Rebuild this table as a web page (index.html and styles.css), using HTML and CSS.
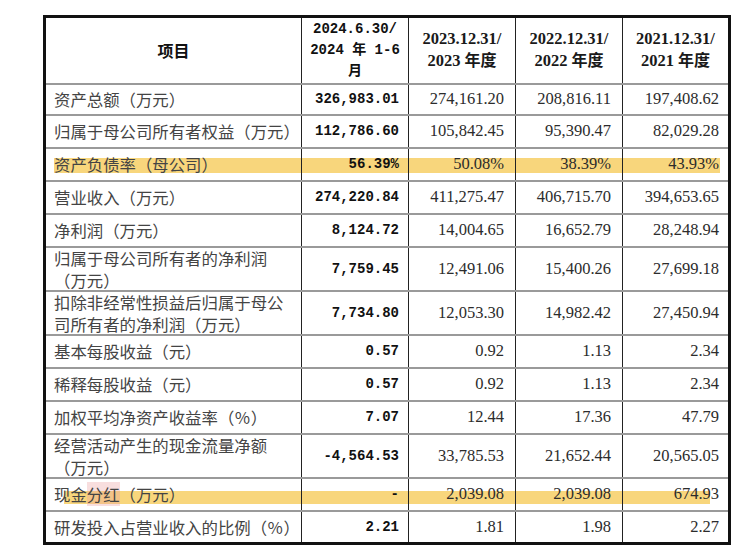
FILE: index.html
```html
<!DOCTYPE html>
<html lang="zh-CN">
<head>
<meta charset="utf-8">
<title>主要财务数据</title>
<link rel="stylesheet" href="styles.css">
</head>
<body>
<div class="page">
<table class="fin">
  <colgroup>
    <col class="c-item">
    <col class="c-num">
    <col class="c-num">
    <col class="c-num">
    <col class="c-num">
  </colgroup>
  <thead>
    <tr class="head">
      <th class="h-item">项目</th>
      <th class="h-cur">2024.6.30/<br>2024 年 1-6<br>月</th>
      <th class="h-year">2023.12.31/<br>2023 <span class="cjk">年度</span></th>
      <th class="h-year">2022.12.31/<br>2022 <span class="cjk">年度</span></th>
      <th class="h-year">2021.12.31/<br>2021 <span class="cjk">年度</span></th>
    </tr>
  </thead>
  <tbody>
    <tr class="single first">
      <td class="item">资产总额（万元）</td>
      <td class="cur">326,983.01</td>
      <td class="num">274,161.20</td>
      <td class="num">208,816.11</td>
      <td class="num">197,408.62</td>
    </tr>
    <tr class="single">
      <td class="item">归属于母公司所有者权益（万元）</td>
      <td class="cur">112,786.60</td>
      <td class="num">105,842.45</td>
      <td class="num">95,390.47</td>
      <td class="num">82,029.28</td>
    </tr>
    <tr class="single hl hl-a">
      <td class="item">资产负债率（母公司）</td>
      <td class="cur">56.39%</td>
      <td class="num">50.08%</td>
      <td class="num">38.39%</td>
      <td class="num">43.93%</td>
    </tr>
    <tr class="single">
      <td class="item">营业收入（万元）</td>
      <td class="cur">274,220.84</td>
      <td class="num">411,275.47</td>
      <td class="num">406,715.70</td>
      <td class="num">394,653.65</td>
    </tr>
    <tr class="single">
      <td class="item">净利润（万元）</td>
      <td class="cur">8,124.72</td>
      <td class="num">14,004.65</td>
      <td class="num">16,652.79</td>
      <td class="num">28,248.94</td>
    </tr>
    <tr class="double">
      <td class="item"><div class="two">归属于母公司所有者的净利润<br>（万元）</div></td>
      <td class="cur">7,759.45</td>
      <td class="num">12,491.06</td>
      <td class="num">15,400.26</td>
      <td class="num">27,699.18</td>
    </tr>
    <tr class="double">
      <td class="item"><div class="two">扣除非经常性损益后归属于母公<br>司所有者的净利润（万元）</div></td>
      <td class="cur">7,734.80</td>
      <td class="num">12,053.30</td>
      <td class="num">14,982.42</td>
      <td class="num">27,450.94</td>
    </tr>
    <tr class="single">
      <td class="item">基本每股收益（元）</td>
      <td class="cur">0.57</td>
      <td class="num">0.92</td>
      <td class="num">1.13</td>
      <td class="num">2.34</td>
    </tr>
    <tr class="single">
      <td class="item">稀释每股收益（元）</td>
      <td class="cur">0.57</td>
      <td class="num">0.92</td>
      <td class="num">1.13</td>
      <td class="num">2.34</td>
    </tr>
    <tr class="single">
      <td class="item">加权平均净资产收益率（％）</td>
      <td class="cur">7.07</td>
      <td class="num">12.44</td>
      <td class="num">17.36</td>
      <td class="num">47.79</td>
    </tr>
    <tr class="double">
      <td class="item"><div class="two">经营活动产生的现金流量净额<br>（万元）</div></td>
      <td class="cur">-4,564.53</td>
      <td class="num">33,785.53</td>
      <td class="num">21,652.44</td>
      <td class="num">20,565.05</td>
    </tr>
    <tr class="single hl hl-b">
      <td class="item">现金<span class="pink">分红</span>（万元）</td>
      <td class="cur">-</td>
      <td class="num">2,039.08</td>
      <td class="num">2,039.08</td>
      <td class="num">674.93</td>
    </tr>
    <tr class="single">
      <td class="item">研发投入占营业收入的比例（％）</td>
      <td class="cur">2.21</td>
      <td class="num">1.81</td>
      <td class="num">1.98</td>
      <td class="num">2.27</td>
    </tr>
  </tbody>
</table>
</div>
</body>
</html>
```

FILE: styles.css
```css
html, body {
  margin: 0;
  padding: 0;
  background: #ffffff;
}

.page {
  padding: 15px 0 0 43px;
}

.fin {
  border-collapse: collapse;
  table-layout: fixed;
  width: 686px;
  border: 3px solid #111;
  font-family: "Noto Sans CJK SC", sans-serif;
}

.c-item { width: 257px; }
.c-num { width: 107px; }

.fin th,
.fin td {
  padding: 0;
  border-left: 1px solid #222;
  border-right: 1px solid #222;
  border-top: 2px solid #9a9a9a;
  border-bottom: 2px solid #9a9a9a;
  vertical-align: middle;
}

.head { height: 67px; }
.single { height: 33px; }
.single.first { height: 31px; }
.double { height: 44px; }

.h-item {
  font-family: "Noto Sans CJK SC", sans-serif;
  font-weight: 700;
  font-size: 16px;
  color: #111;
  text-align: center;
}

.h-cur {
  font-family: "Liberation Mono", "Noto Sans CJK SC", monospace;
  font-weight: 700;
  font-size: 14px;
  line-height: 21px;
  color: #111;
  text-align: center;
}

.h-year {
  font-family: "Liberation Serif", "Noto Sans CJK SC", serif;
  font-weight: 700;
  font-size: 16.5px;
  line-height: 20px;
  color: #1a1a1a;
  text-align: center;
  padding-top: 2px;
}

.h-year .cjk {
  font-family: "Noto Sans CJK SC", sans-serif;
  font-size: 16px;
}

.item {
  font-family: "Noto Sans CJK SC", sans-serif;
  font-size: 16.4px;
  line-height: 22px;
  color: #444;
  text-align: left;
  padding: 0 1px 0 8px !important;
  white-space: nowrap;
}

.two {
  margin: -1px 0;
}

.cur {
  font-family: "Liberation Mono", monospace;
  font-weight: 700;
  font-size: 14px;
  color: #111;
  text-align: right;
  padding-right: 9px !important;
  white-space: nowrap;
}

.num {
  font-family: "Liberation Serif", serif;
  font-size: 16.5px;
  color: #2c2c2c;
  text-align: right;
  padding-right: 11px !important;
  white-space: nowrap;
}

.fin tr td:last-child.num {
  padding-right: 9px !important;
}

/* marker highlight bands */
.hl td {
  background-repeat: no-repeat;
  background-image: linear-gradient(to bottom,
    transparent var(--b0),
    #f8d67c var(--b0),
    #f8d67c var(--b1),
    transparent var(--b1));
}

.hl-a { --b0: 30%; --b1: 76%; }
.hl-b { --b0: 40%; --b1: 82%; }

.hl-a td:first-child {
  background-size: calc(100% - 8px) 100%;
  background-position: right top;
}
.hl-a td:last-child {
  background-size: calc(100% - 8px) 100%;
  background-position: left top;
}

.hl-b td:first-child {
  background-size: calc(100% - 18px) 100%;
  background-position: right top;
}
.hl-b td:last-child {
  background-size: calc(100% - 18px) 100%;
  background-position: left top;
}

.pink {
  background: rgba(236, 160, 160, 0.35);
}
```
